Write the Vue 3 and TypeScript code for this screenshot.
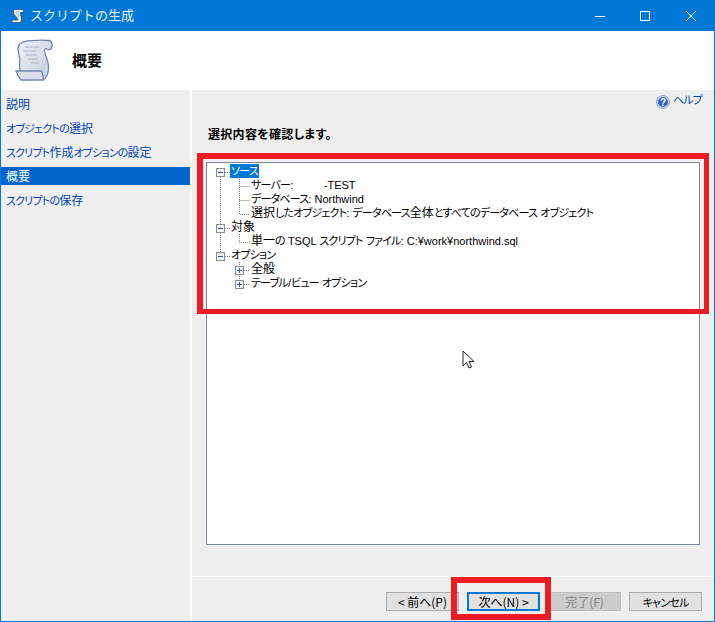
<script setup lang="ts">
interface Row { text: string; level: number; box?: '+' | '-'; selected?: boolean }
interface Seg { t: string; c: string }
const rows: Row[] = [
  { text: 'ソース', level: 0, box: '-', selected: true },
  { text: 'サーバー:          -TEST', level: 1 },
  { text: 'データベース: Northwind', level: 1 },
  { text: '選択したオブジェクト: データベース全体とすべてのデータベース オブジェクト', level: 1 },
  { text: '対象', level: 0, box: '-' },
  { text: '単一の TSQL スクリプト ファイル: C:¥work¥northwind.sql', level: 1 },
  { text: 'オプション', level: 0, box: '-' },
  { text: '全般', level: 1, box: '+' },
  { text: 'テーブル/ビュー オプション', level: 1, box: '+' },
]
const nav = [
  { label: '説明' },
  { label: 'オブジェクトの選択' },
  { label: 'スクリプト作成オプションの設定' },
  { label: '概要', active: true },
  { label: 'スクリプトの保存' },
]
// The original UI font has narrow kana and full-width kanji: style each run on its own.
function segs(text: string): Seg[] {
  const out: Seg[] = []
  for (const m of text.match(/[\u3040-\u30ff]+|[\u4e00-\u9fff]+|[^\u3040-\u30ff\u4e00-\u9fff]+/g) ?? []) {
    const c = /^[\u3040-\u30ff]/.test(m) ? 'kana' : /^[\u4e00-\u9fff]/.test(m) ? 'kanji' : 'latin'
    out.push({ t: m, c })
  }
  return out
}
</script>

<template>
  <div class="window">
    <header class="titlebar">
      <svg class="title-icon" width="16" height="16" viewBox="0 0 16 16">
        <path d="M4 1.500h9.500l-.5 3h-2.500c-.5 2 1 4 1 6.500 0 1.500-.5 3-1.500 3.500H1.500l1-2.500h5.500C7.500 9 3 7 3.500 3.500 3.600 2.500 3.700 2 4 1.500z" fill="#f4f6fa" stroke="#3c4c66" stroke-width=".8"/>
        <path d="M5.500 4h4M6 6h3M7 8h3" stroke="#8a9ab5" stroke-width=".8"/>
      </svg>
      <span class="title-text">スクリプトの生成</span>
      <div class="controls">
        <svg class="ctl" width="46" height="30" viewBox="0 0 46 30"><path d="M18 15.500h10" stroke="#fff" stroke-width="1"/></svg>
        <svg class="ctl" width="46" height="30" viewBox="0 0 46 30"><rect x="17.500" y="10.500" width="9" height="9" fill="none" stroke="#fff"/></svg>
        <svg class="ctl" width="46" height="30" viewBox="0 0 46 30"><path d="M17 10l10 10M27 10L17 20" stroke="#fff" stroke-width="1"/></svg>
      </div>
    </header>

    <section class="banner">
      <svg class="scroll" width="42" height="44" viewBox="0 0 42 44">
        <defs>
          <linearGradient id="sc" x1="0" y1="0" x2="1" y2="1">
            <stop offset="0" stop-color="#eef1f7"/>
            <stop offset="1" stop-color="#c3cce0"/>
          </linearGradient>
        </defs>
        <path d="M10 3C15 1 31 1 36 1.500c3.500 .5 4 6 2 8.500-1.500 1-3.500 .5-5.500-.5-1.500 1-1 4 .5 8 2 5 3 8.500 2.500 13-.5 5-1.500 8-5 10-.5-2-1-5-2-7.500l-21-.5C5 26 8 21 6 16 4 10 5 5 10 3z" fill="url(#sc)" stroke="#7686ab" stroke-width="1.300"/>
        <path d="M3 32H28.500c1 2 1.800 6 2 9H8C5.500 38 4 35 3 32z" fill="#dbe0ec" stroke="#7686ab" stroke-width="1.300"/>
        <path d="M12 8h14M10 12h13M12 16h12M15 20h10M18 24h8" stroke="#aab4cb" stroke-width="1"/>
      </svg>
      <h1 class="banner-title">概要</h1>
    </section>

    <div class="body">
      <nav class="nav">
        <a v-for="item in nav" :key="item.label" class="nav-item" :class="{ active: item.active }"><span v-for="(s, j) in segs(item.label)" :key="j" :class="s.c">{{ s.t }}</span></a>
      </nav>

      <div class="content">
        <main class="main">
          <div class="help">
            <svg class="help-icon" width="14" height="14" viewBox="0 0 14 14">
              <circle cx="7" cy="7" r="6.400" fill="#dfe7f5" stroke="#7e98cc" stroke-width="1"/>
              <circle cx="7" cy="7" r="5" fill="#2f62c4"/>
              <text x="7" y="10.500" text-anchor="middle" class="q">?</text>
            </svg>
            <span class="kana">ヘルプ</span>
          </div>
          <p class="prompt">選択内容を確認します。</p>

          <div class="tree">
            <svg class="tree-lines" width="60" height="130" viewBox="0 0 60 130">
              <path d="M13.500 14V89M32.500 14V51.500H43M32.500 23.500H43M32.500 37.500H43M32.500 71V79.500H43M32.500 99V117M37 107.500h6M37 121.500h6M18 9.500h5M18 65.500h5M18 93.500h5" stroke="#7a7a7a" stroke-dasharray="1 1" fill="none"/>
            </svg>
            <div v-for="(r, i) in rows" :key="i" class="row" :class="'lv' + r.level">
              <span v-if="r.box" class="box">
                <svg width="9" height="9" viewBox="0 0 9 9">
                  <rect x=".5" y=".5" width="8" height="8" fill="#f2f2f2" stroke="#8c8c8c"/>
                  <path d="M2 4.500h5" stroke="#3a56a5"/>
                  <path v-if="r.box === '+'" d="M4.500 2v5" stroke="#3a56a5"/>
                </svg>
              </span>
              <span class="label" :class="{ selected: r.selected }"><span v-for="(s, j) in segs(r.text)" :key="j" class="seg" :class="s.c">{{ s.t }}</span></span>
            </div>
          </div>

          <div class="annotation annotation-tree"></div>
        </main>

        <footer class="footer">
          <button class="btn">&lt; 前へ(P)</button>
          <button class="btn default">次へ(N) &gt;</button>
          <button class="btn disabled">完了(F)</button>
          <button class="btn"><span class="kana">キャンセル</span></button>
          <div class="annotation annotation-next"></div>
        </footer>
      </div>
    </div>

    <svg class="cursor" width="13" height="20" viewBox="0 0 13 20">
      <path d="M1 1v15l3.500-3.500 2.500 5.500 2.500-1-2.500-5.500H12z" fill="#fff" stroke="#222" stroke-width="1"/>
    </svg>
  </div>
</template>

<style scoped>
.window {
  position: relative;
  width: 715px;
  height: 622px;
  box-sizing: border-box;
  border: 1px solid #0078d7;
  border-top: 0;
  background: #efefef;
  display: flex;
  flex-direction: column;
  overflow: hidden;
  font-family: "Noto Sans CJK JP", "Liberation Sans", sans-serif;
  font-size: 12px;
  color: #000;
}
.kana { font-size: 11px; font-feature-settings: "palt"; letter-spacing: -0.8px; }
.kanji { font-size: 12px; }
.latin { font-family: "Liberation Sans", "Noto Sans CJK JP", sans-serif; font-size: 11px; }
.seg { position: relative; top: -1px; }
.titlebar {
  height: 31px;
  flex: none;
  margin: 0 -1px;
  background: #0078d7;
  display: flex;
  align-items: center;
  color: #e6f1fb;
}
.title-icon { margin-left: 10px; }
.title-text { margin: -2px 0 0 4px; font-size: 13px; }
.controls { margin-left: auto; display: flex; }
.ctl { display: block; }
.banner {
  height: 59px;
  flex: none;
  background: #fff;
  display: flex;
  align-items: center;
  box-sizing: border-box;
  padding-left: 12px;
}
.scroll { display: block; margin-top: 1px; }
.banner-title {
  margin: 0 0 1px 17px;
  font-size: 15px;
  font-weight: 700;
  line-height: 20px;
}
.body { flex: 1; display: flex; min-height: 0; background: #fff; }
.nav {
  width: 189px;
  flex: none;
  padding-top: 5px;
  background: #efefef;
  display: flex;
  flex-direction: column;
  gap: 6px;
}
.nav-item {
  height: 18px;
  line-height: 18px;
  padding-left: 5px;
  color: #0046ad;
}
.nav-item.active { background: #0066cc; color: #fff; }
.content {
  flex: 1;
  margin-left: 2px;
  display: flex;
  flex-direction: column;
  min-width: 0;
}
.main {
  position: relative;
  flex: 1;
  background: #efefef;
  padding: 0 14px;
  border-bottom: 1px solid #fff;
}
.help {
  display: flex;
  justify-content: flex-end;
  align-items: flex-start;
  gap: 3px;
  height: 17px;
  margin-top: 2px;
  margin-right: -2px;
  color: #0046ad;
  line-height: 14px;
}
.help-icon { margin-top: 3px; }
.q { font: 700 10px "Liberation Sans", sans-serif; fill: #fff; }
.prompt {
  margin: 17px 0 0 2px;
  font-weight: 700;
  font-size: 12px;
  letter-spacing: 0.3px;
  font-feature-settings: "palt";
  line-height: 16px;
}
.tree {
  position: relative;
  box-sizing: border-box;
  height: 383px;
  margin-top: 20px;
  background: #fff;
  border: 1px solid #7f8a99;
  padding-top: 1px;
}
.tree-lines { position: absolute; left: 0; top: 0; pointer-events: none; }
.row {
  position: relative;
  display: flex;
  align-items: center;
  height: 14px;
  white-space: pre;
}
.lv0 { padding-left: 23px; }
.lv1 { padding-left: 43px; }
.box { position: absolute; top: 4px; display: block; height: 9px; }
.lv0 .box { left: 9px; }
.lv1 .box { left: 28px; }
.box svg { display: block; }
.label { line-height: 14px; padding: 0 1px; }
.label.selected { background: #0078d7; color: #fff; }
.annotation {
  position: absolute;
  border-style: solid;
  border-color: #ed1c24;
  box-sizing: border-box;
  pointer-events: none;
}
.annotation-tree { left: 5px; top: 63px; width: 512px; height: 161px; border-width: 6px 5px 5px 6px; }
.footer {
  position: relative;
  height: 44px;
  flex: none;
  background: #efefef;
  display: flex;
  align-items: flex-start;
  gap: 8px;
  padding: 15px 12px 0 0;
  box-sizing: border-box;
  justify-content: flex-end;
}
.btn {
  box-sizing: border-box;
  width: 73px;
  height: 19px;
  padding: 0;
  border: 1px solid #adadad;
  background: #e1e1e1;
  font: inherit;
  line-height: 16px;
  color: #000;
}
.btn.default { border: 2px solid #0078d7; line-height: 14px; }
.btn.disabled { background: #cccccc; border-color: #bfbfbf; color: #838383; }
.annotation-next { left: 259px; top: 0; width: 100px; height: 43px; border-width: 6px; }
.cursor { position: absolute; left: 461px; top: 350px; }
</style>
